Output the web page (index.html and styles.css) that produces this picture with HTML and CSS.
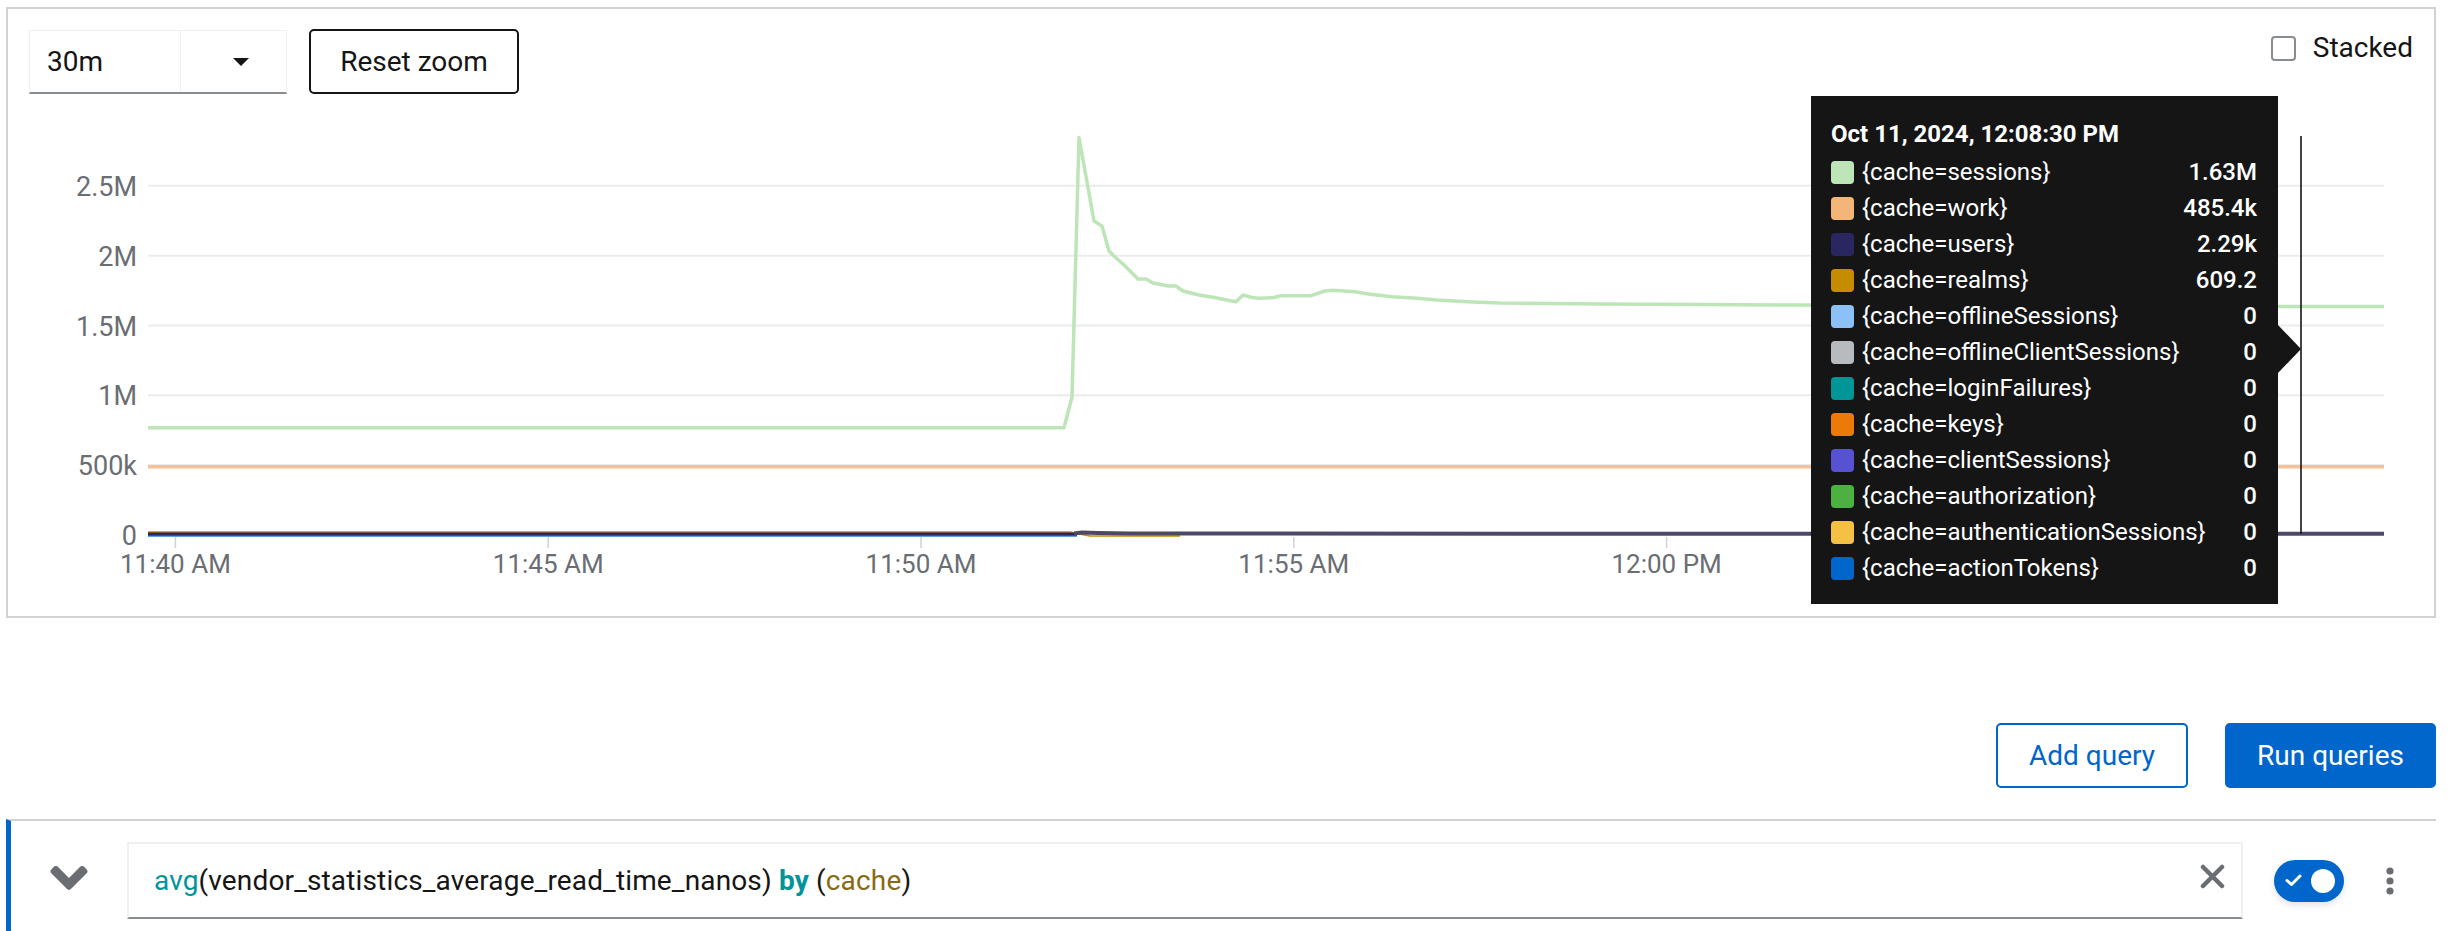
FILE: index.html
```html
<!DOCTYPE html>
<html lang="en">
<head>
<meta charset="utf-8">
<title>Graph</title>
<link rel="stylesheet" href="styles.css">
</head>
<body>
<div class="page">
  <section class="graph-panel">
    <div class="graph-toolbar">
      <div class="range-select">
        <span class="range-value">30m</span>
        <span class="range-toggle"><span class="caret"></span></span>
      </div>
      <button class="btn-reset" type="button">Reset zoom</button>
      <label class="stacked"><span class="checkbox"></span><span>Stacked</span></label>
    </div>
    <svg class="chart" width="2426" height="522" viewBox="8 94 2426 522" xmlns="http://www.w3.org/2000/svg">
      <g class="grid">
        <line x1="148" y1="185.7" x2="2384" y2="185.7"/>
        <line x1="148" y1="255.7" x2="2384" y2="255.7"/>
        <line x1="148" y1="325.5" x2="2384" y2="325.5"/>
        <line x1="148" y1="395.2" x2="2384" y2="395.2"/>
        <line x1="148" y1="465" x2="2384" y2="465"/>
      </g>
      <g class="ticks">
        <line x1="175.4" y1="537" x2="175.4" y2="548"/>
        <line x1="548.2" y1="537" x2="548.2" y2="548"/>
        <line x1="921" y1="537" x2="921" y2="548"/>
        <line x1="1293.8" y1="537" x2="1293.8" y2="548"/>
        <line x1="1666.6" y1="537" x2="1666.6" y2="548"/>
      </g>
      <g class="axis-y">
        <text x="137" y="196">2.5M</text>
        <text x="137" y="266">2M</text>
        <text x="137" y="335.5">1.5M</text>
        <text x="137" y="405">1M</text>
        <text x="137" y="475">500k</text>
        <text x="137" y="545">0</text>
      </g>
      <g class="axis-x">
        <text x="175.4" y="573">11:40 AM</text>
        <text x="548.2" y="573">11:45 AM</text>
        <text x="921" y="573">11:50 AM</text>
        <text x="1293.8" y="573">11:55 AM</text>
        <text x="1666.6" y="573">12:00 PM</text>
      </g>
      <polyline class="s-blue" points="148,536.1 1077,536.1"/>
      <polyline class="s-gold" points="148,532.1 1070,532.1 1090,536 1180,536"/>
      <polyline class="s-navy-a" points="148,534.2 1077,534.2"/>
      <polyline class="s-navy-b" points="1074,533.6 1082,532.6 1098,533 1130,533.6 2384,533.8"/>
      <polyline class="s-orange" points="148,466.8 2384,466.8"/>
      <polyline class="s-green" points="148,427.7 1064,427.7 1072,397 1079,137.5 1094,221 1102,226 1109,251 1115,257 1124,265 1132,273 1138,279 1146,279 1153,283 1168,286 1176,286 1183,291 1199,295 1213,297.3 1228,300.3 1236,301.7 1243,295 1251,297.3 1258,298.3 1273,297.7 1281,295.7 1311,295.7 1325,291 1333,290.3 1355,291.7 1370,294.3 1392,296.7 1417,298.3 1437,300 1473,302 1500,303 1550,303.5 1600,304 1700,304.5 1800,305 1900,305.5 2000,305.5 2100,306 2200,306 2301,306.5 2384,306.5"/>
      <line class="cursor" x1="2301" y1="136" x2="2301" y2="534"/>
    </svg>
    <div class="tooltip">
      <div class="tooltip-title">Oct 11, 2024, 12:08:30 PM</div>
      <div class="tt-row"><span class="swatch c-sessions"></span><span class="tt-label">{cache=sessions}</span><span class="tt-value">1.63M</span></div>
      <div class="tt-row"><span class="swatch c-work"></span><span class="tt-label">{cache=work}</span><span class="tt-value">485.4k</span></div>
      <div class="tt-row"><span class="swatch c-users"></span><span class="tt-label">{cache=users}</span><span class="tt-value">2.29k</span></div>
      <div class="tt-row"><span class="swatch c-realms"></span><span class="tt-label">{cache=realms}</span><span class="tt-value">609.2</span></div>
      <div class="tt-row"><span class="swatch c-offline"></span><span class="tt-label">{cache=offlineSessions}</span><span class="tt-value">0</span></div>
      <div class="tt-row"><span class="swatch c-offclient"></span><span class="tt-label">{cache=offlineClientSessions}</span><span class="tt-value">0</span></div>
      <div class="tt-row"><span class="swatch c-login"></span><span class="tt-label">{cache=loginFailures}</span><span class="tt-value">0</span></div>
      <div class="tt-row"><span class="swatch c-keys"></span><span class="tt-label">{cache=keys}</span><span class="tt-value">0</span></div>
      <div class="tt-row"><span class="swatch c-client"></span><span class="tt-label">{cache=clientSessions}</span><span class="tt-value">0</span></div>
      <div class="tt-row"><span class="swatch c-authz"></span><span class="tt-label">{cache=authorization}</span><span class="tt-value">0</span></div>
      <div class="tt-row"><span class="swatch c-authn"></span><span class="tt-label">{cache=authenticationSessions}</span><span class="tt-value">0</span></div>
      <div class="tt-row"><span class="swatch c-action"></span><span class="tt-label">{cache=actionTokens}</span><span class="tt-value">0</span></div>
    </div>
  </section>

  <div class="query-actions">
    <button class="btn-secondary" type="button">Add query</button>
    <button class="btn-primary" type="button">Run queries</button>
  </div>

  <div class="query-row">
    <span class="expand">
      <svg width="38" height="24" viewBox="0 153 320 207" aria-hidden="true"><path fill="#6a6e73" d="M143 352.3L7 216.3c-9.4-9.4-9.4-24.6 0-33.9l22.6-22.6c9.4-9.4 24.6-9.4 33.9 0l96.4 96.4 96.4-96.4c9.4-9.4 24.6-9.4 33.9 0l22.6 22.6c9.4 9.4 9.4 24.6 0 33.9l-136 136c-9.2 9.4-24.4 9.4-33.8 0z"/></svg>
    </span>
    <div class="query-input">
      <span class="query-text"><span class="tok-fn">avg</span>(vendor_statistics_average_read_time_nanos) <span class="tok-kw">by</span> (<span class="tok-label">cache</span>)</span>
      <svg class="clear-icon" width="25" height="25" viewBox="0 0 25 25" aria-hidden="true"><path d="M3 3L22 22M22 3L3 22" stroke="#6a6e73" stroke-width="4.5" stroke-linecap="round"/></svg>
    </div>
    <span class="switch">
      <svg class="switch-check" width="17" height="12" viewBox="0 0 17 12" aria-hidden="true"><path d="M2 6.5L6.5 10.5L15 2" fill="none" stroke="#fff" stroke-width="3" stroke-linecap="round" stroke-linejoin="round"/></svg>
      <span class="switch-knob"></span>
    </span>
    <span class="kebab">
      <svg width="8" height="28" viewBox="0 0 8 28" aria-hidden="true"><circle cx="4" cy="4" r="3.6" fill="#6a6e73"/><circle cx="4" cy="14" r="3.6" fill="#6a6e73"/><circle cx="4" cy="24" r="3.6" fill="#6a6e73"/></svg>
    </span>
  </div>
</div>
</body>
</html>
```

FILE: styles.css
```css
* { box-sizing: border-box; }
html, body { margin: 0; padding: 0; background: #fff; }
body {
  font-family: Roboto, "Liberation Sans", sans-serif;
  color: #151515;
  font-size: 28px;
  overflow: hidden;
}
button { font-family: inherit; font-size: 28px; cursor: pointer; white-space: nowrap; }

.page { padding: 7px 13px 0 6px; }

.graph-panel {
  position: relative;
  border: 2px solid #d2d2d2;
  height: 611px;
}

.graph-toolbar {
  display: flex;
  align-items: flex-start;
  gap: 22px;
  height: 85px;
  padding: 21px 21px 0 21px;
}

.range-select {
  display: flex;
  width: 258px;
  height: 64px;
  border: 1.5px solid #f0f0f0;
  border-bottom: 2px solid #8a8d90;
}
.range-value {
  width: 151px;
  display: flex;
  align-items: center;
  padding-left: 17px;
  border-right: 1.5px solid #f0f0f0;
}
.range-toggle {
  flex: 1;
  display: flex;
  align-items: center;
  padding-left: 52px;
}
.caret {
  width: 0; height: 0;
  border-left: 8px solid transparent;
  border-right: 8px solid transparent;
  border-top: 8px solid #151515;
}

.btn-reset {
  width: 210px;
  height: 65px;
  margin-top: -1px;
  background: #fff;
  color: #151515;
  border: 2px solid #151515;
  border-radius: 5px;
  padding: 0;
}

.stacked {
  margin-left: auto;
  display: flex;
  align-items: center;
  gap: 17px;
  line-height: 32px;
  margin-top: 2px;
}
.checkbox {
  width: 25px; height: 25px;
  border: 2px solid #8a8d90;
  border-radius: 4px;
}

.chart { display: block; }
.chart .grid line { stroke: #ececec; stroke-width: 2; }
.chart .ticks line { stroke: #d2d2d2; stroke-width: 1.5; }
.chart text { font-family: Roboto, "Liberation Sans", sans-serif; font-size: 27px; fill: #6a6e73; }
.chart .axis-y text { text-anchor: end; }
.chart .axis-x text { text-anchor: middle; font-size: 26px; }
.chart polyline { fill: none; stroke-linejoin: round; }
.s-green { stroke: #bde5b8; stroke-width: 3.5; }
.s-orange { stroke: #f6c196; stroke-width: 3.5; }
.s-navy-a { stroke: #2a265f; stroke-width: 3.2; }
.s-navy-b { stroke: #4d4866; stroke-width: 4; }
.s-gold { stroke: #c58c00; stroke-width: 1.6; }
.s-blue { stroke: #2f7fd4; stroke-width: 1.1; }
.cursor { stroke: #151515; stroke-width: 1.6; }

.tooltip {
  position: absolute;
  left: 1803px;
  top: 87px;
  width: 467px;
  height: 508px;
  background: #151515;
  color: #fff;
  font-size: 24px;
  padding: 18px 21px 18px 20px;
}
.tooltip::after {
  content: "";
  position: absolute;
  left: 100%;
  top: 229px;
  width: 0; height: 0;
  border-left: 23px solid #151515;
  border-top: 24px solid transparent;
  border-bottom: 24px solid transparent;
}
.tooltip-title {
  font-weight: 700;
  line-height: 40px;
  white-space: nowrap;
}
.tt-row {
  display: flex;
  align-items: center;
  height: 36px;
  white-space: nowrap;
}
.swatch {
  width: 23px; height: 23px;
  border-radius: 4px;
  margin-right: 8px;
  flex: none;
}
.tt-label { flex: 1; }
.tt-value { font-weight: 500; }

.c-sessions { background: #bde5b8; }
.c-work { background: #f4b678; }
.c-users { background: #2a265f; }
.c-realms { background: #c58c00; }
.c-offline { background: #8bc1f7; }
.c-offclient { background: #b8bbbe; }
.c-login { background: #009596; }
.c-keys { background: #ec7a08; }
.c-client { background: #5752d1; }
.c-authz { background: #4cb140; }
.c-authn { background: #f4c145; }
.c-action { background: #0066cc; }

.query-actions {
  display: flex;
  justify-content: flex-end;
  gap: 37px;
  margin-top: 105px;
}
.btn-secondary, .btn-primary {
  height: 65px;
  border-radius: 5px;
  padding: 0;
}
.btn-secondary {
  width: 192px;
  background: #fff;
  color: #0066cc;
  border: 2px solid #0066cc;
}
.btn-primary {
  width: 211px;
  background: #0066cc;
  color: #fff;
  border: 2px solid #0066cc;
}

.query-row {
  display: flex;
  align-items: center;
  margin-top: 31px;
  border-top: 2px solid #d2d2d2;
  border-left: 5px solid #0066cc;
  padding: 21px 18px 30px 0;
}
.expand {
  width: 116px;
  display: flex;
  justify-content: center;
  margin-top: -5px;
}
.expand svg { display: block; }
.query-input {
  flex: 1;
  height: 77px;
  display: flex;
  align-items: center;
  padding: 0 16px 0 25px;
  border: 2px solid #f0f0f0;
  border-bottom: 2px solid #8a8d90;
  font-size: 28px;
  letter-spacing: 0.15px;
}
.query-text { flex: 1; white-space: nowrap; }
.tok-fn { color: #00959b; }
.tok-kw { color: #00959b; font-weight: 700; }
.tok-label { color: #866b13; }
.clear-icon { display: block; margin-top: -9px; }

.switch {
  position: relative;
  width: 70px;
  height: 42px;
  border-radius: 21px;
  background: #0066cc;
  margin-left: 31px;
  box-shadow: 0 3px 6px rgba(3, 3, 3, 0.12);
  flex: none;
}
.switch-check { position: absolute; left: 11px; top: 14px; }
.switch-knob {
  position: absolute;
  right: 9px;
  top: 9px;
  width: 24px; height: 24px;
  border-radius: 50%;
  background: #fff;
}

.kebab {
  width: 56px;
  margin-left: 18px;
  display: flex;
  justify-content: center;
}
.kebab svg { display: block; }
```
